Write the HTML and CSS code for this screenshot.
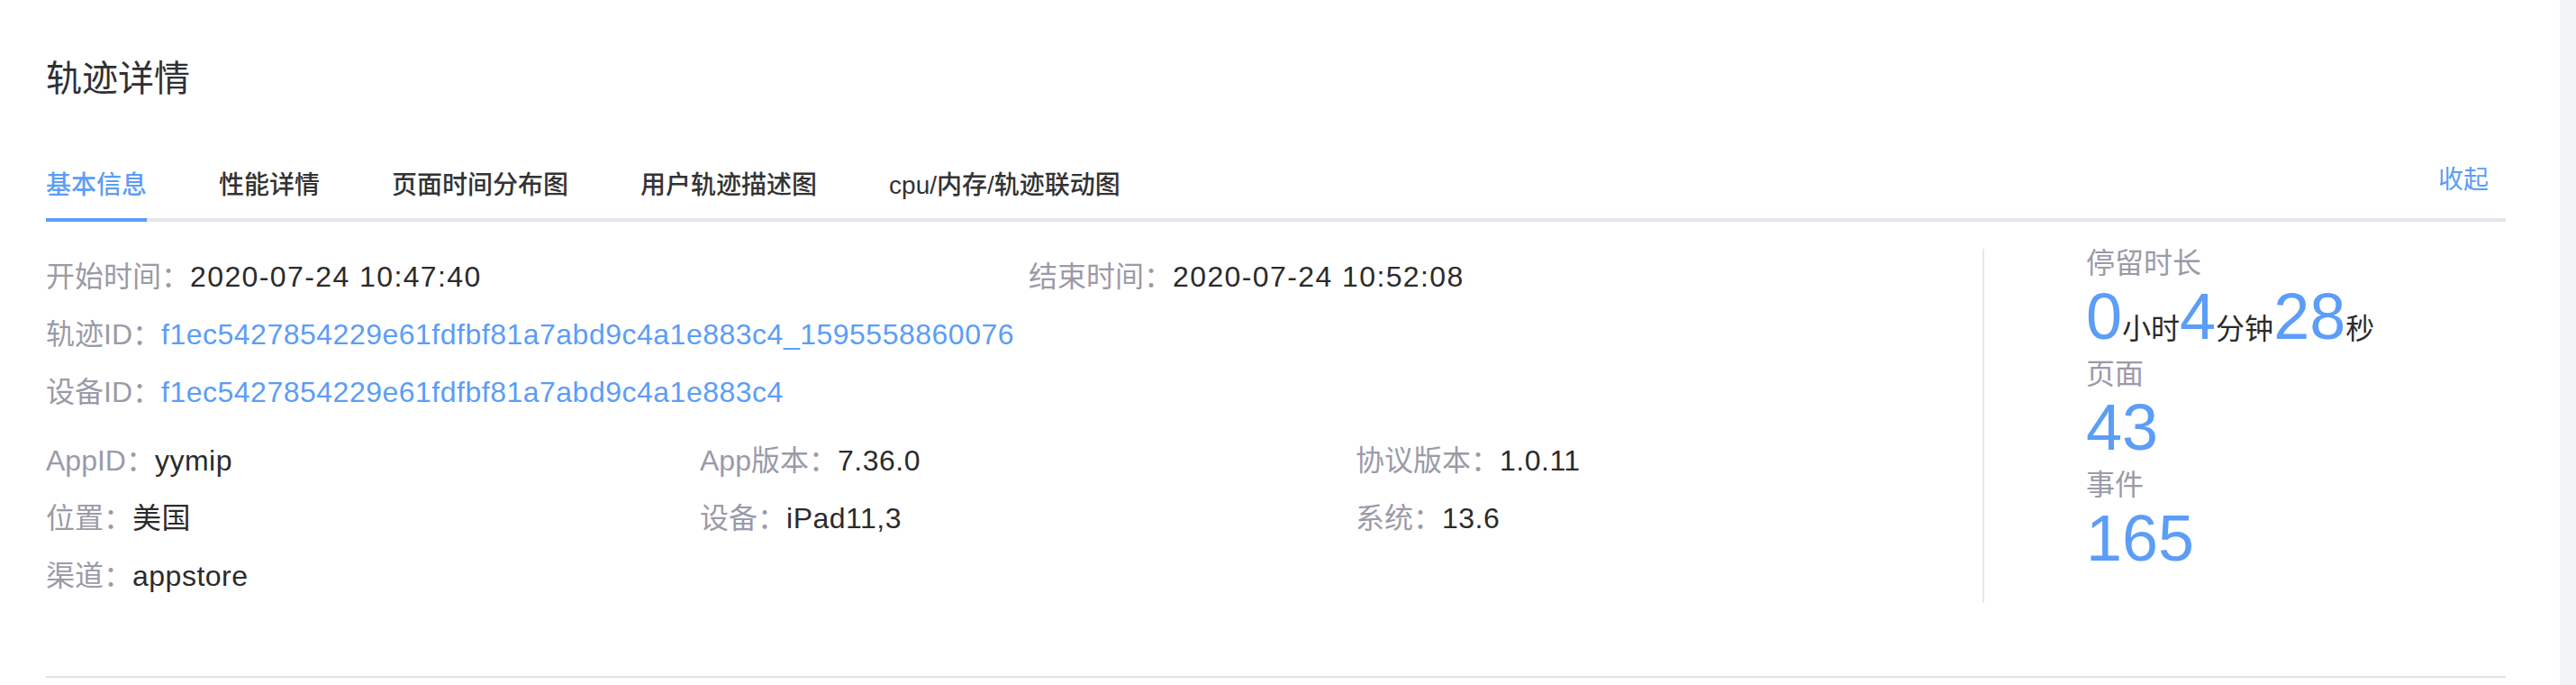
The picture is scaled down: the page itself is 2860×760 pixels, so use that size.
FILE: index.html
```html
<!DOCTYPE html>
<html lang="zh-CN">
<head>
<meta charset="utf-8">
<title>轨迹详情</title>
<link rel="stylesheet" href="styles.css">
</head>
<body>
<div class="card">
  <h1 class="title">轨迹详情</h1>
  <div class="tabs">
    <div class="tab active">基本信息</div>
    <div class="tab">性能详情</div>
    <div class="tab">页面时间分布图</div>
    <div class="tab">用户轨迹描述图</div>
    <div class="tab">cpu/内存/轨迹联动图</div>
    <div class="collapse">收起</div>
  </div>
  <div class="content">
    <div class="info">
      <div class="grid2">
        <div class="row"><span class="lbl">开始时间：</span><span class="val date">2020-07-24 10:47:40</span></div>
        <div class="row"><span class="lbl">结束时间：</span><span class="val date">2020-07-24 10:52:08</span></div>
      </div>
      <div class="row"><span class="lbl">轨迹ID：</span><span class="val link">f1ec5427854229e61fdfbf81a7abd9c4a1e883c4_1595558860076</span></div>
      <div class="row"><span class="lbl">设备ID：</span><span class="val link">f1ec5427854229e61fdfbf81a7abd9c4a1e883c4</span></div>
      <div class="grid3">
        <div class="row"><span class="lbl">AppID：</span><span class="val">yymip</span></div>
        <div class="row"><span class="lbl">App版本：</span><span class="val">7.36.0</span></div>
        <div class="row"><span class="lbl">协议版本：</span><span class="val">1.0.11</span></div>
        <div class="row"><span class="lbl">位置：</span><span class="val">美国</span></div>
        <div class="row"><span class="lbl">设备：</span><span class="val">iPad11,3</span></div>
        <div class="row"><span class="lbl">系统：</span><span class="val">13.6</span></div>
        <div class="row"><span class="lbl">渠道：</span><span class="val">appstore</span></div>
      </div>
    </div>
    <div class="stats">
      <div class="stat-lbl">停留时长</div>
      <div class="stat-num">0<span class="unit">小时</span>4<span class="unit">分钟</span>28<span class="unit">秒</span></div>
      <div class="stat-lbl">页面</div>
      <div class="stat-num">43</div>
      <div class="stat-lbl">事件</div>
      <div class="stat-num">165</div>
    </div>
  </div>
  <div class="bottom-line"></div>
</div>
</body>
</html>
```
FILE: styles.css
```css
html, body {
  margin: 0;
  padding: 0;
  background: #f3f4f8;
}
body {
  font-family: "Liberation Sans", "Noto Sans CJK SC", sans-serif;
  color: #2b2b2b;
}
.card {
  width: 2842px;
  height: 760px;
  box-sizing: border-box;
  background: #ffffff;
  padding: 59px 60px 0 51px;
  overflow: hidden;
}
.title {
  margin: 0;
  font-size: 40px;
  line-height: 56px;
  font-weight: normal;
  color: #2f3034;
}
.tabs {
  display: flex;
  align-items: flex-start;
  gap: 80px;
  margin-top: 71px;
  border-bottom: 4px solid #e5e7ed;
}
.tab {
  font-size: 28px;
  line-height: 40px;
  font-weight: 500;
  color: #333333;
  padding-bottom: 16px;
  border-bottom: 4px solid transparent;
  margin-bottom: -4px;
}
.tab.active {
  color: #5c9df7;
  border-bottom-color: #5c9df7;
}
.collapse {
  margin-left: auto;
  margin-right: 19px;
  margin-top: -6px;
  font-size: 28px;
  line-height: 40px;
  color: #5c9df7;
}
.content {
  display: flex;
  align-items: flex-start;
  margin-top: 30px;
}
.info {
  flex: 1;
  padding-top: 9px;
}
.row {
  font-size: 32px;
  line-height: 44px;
  margin-bottom: 20px;
  white-space: nowrap;
}
.lbl {
  color: #9b9aa8;
}
.val {
  color: #2b2b2b;
  letter-spacing: 0.5px;
}
.val.date {
  letter-spacing: 1.4px;
}
.val.link {
  color: #5c9df7;
}
.grid2 {
  display: grid;
  grid-template-columns: 1091px 1fr;
}
.grid3 {
  display: grid;
  grid-template-columns: 726px 728px 1fr;
  margin-top: 32px;
}
.stats {
  width: 466px;
  height: 393px;
  border-left: 2px solid #e8e8ec;
  padding-left: 113px;
  box-sizing: content-box;
}
.stat-lbl {
  font-size: 32px;
  line-height: 32px;
  color: #9b9aa8;
}
.stat-num {
  font-size: 72px;
  line-height: 87px;
  margin-bottom: 4px;
  color: #5c9df7;
  white-space: nowrap;
}
.unit {
  font-size: 32px;
  line-height: 1;
  color: #2b2b2b;
}
.bottom-line {
  height: 2px;
  background: #e1e1e3;
  margin-top: 69px;
}
```
